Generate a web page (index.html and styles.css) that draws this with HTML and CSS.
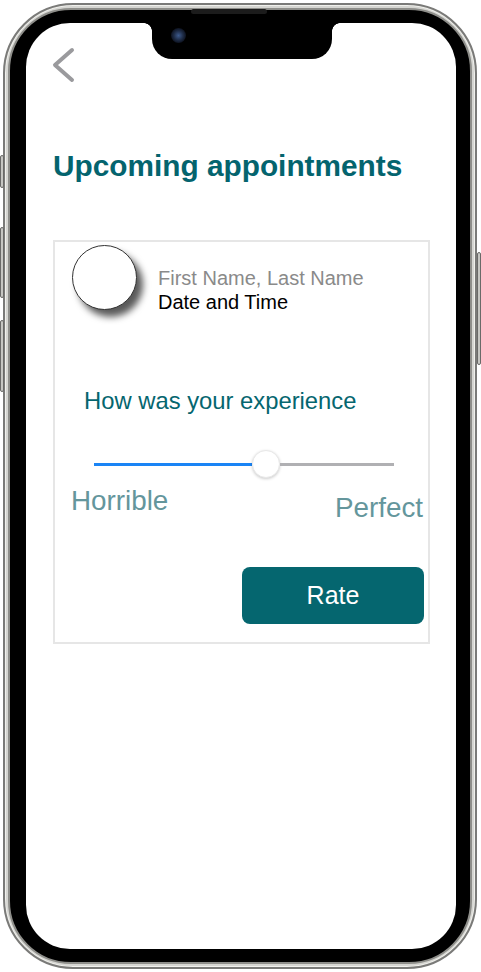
FILE: index.html
```html
<!DOCTYPE html>
<html lang="en">
<head>
<meta charset="utf-8">
<title>Upcoming appointments</title>
<link rel="stylesheet" href="styles.css">
</head>
<body>
<div class="device">
  <span class="btn btn-l1"></span>
  <span class="btn btn-l2"></span>
  <span class="btn btn-l3"></span>
  <span class="btn btn-r1"></span>
  <div class="frame">
    <div class="bezel">
      <span class="speaker"></span>
      <div class="screen">
        <div class="notch"><span class="camera"></span></div>
        <div class="back">
          <svg width="24" height="36" viewBox="0 0 24 36" aria-hidden="true">
            <path d="M20 3 L3 18 L20 33" fill="none" stroke="#9a9a9d" stroke-width="4" stroke-linecap="round" stroke-linejoin="round"/>
          </svg>
        </div>
        <h1 class="title">Upcoming appointments</h1>
        <section class="card">
          <div class="card-head">
            <div class="avatar"></div>
            <div class="who">
              <div class="name">First Name, Last Name</div>
              <div class="when">Date and Time</div>
            </div>
          </div>
          <p class="question">How was your experience</p>
          <div class="slider">
            <span class="fill"></span>
            <span class="thumb"></span>
            <span class="rest"></span>
          </div>
          <div class="labels">
            <span class="lbl">Horrible</span>
            <span class="lbl lbl-end">Perfect</span>
          </div>
          <div class="actions">
            <button class="rate">Rate</button>
          </div>
        </section>
      </div>
    </div>
  </div>
</div>
</body>
</html>
```
FILE: styles.css
```css
* { box-sizing: border-box; }
html, body { margin: 0; padding: 0; background: #fff; }
body { font-family: "Liberation Sans", Arial, sans-serif; width: 481px; height: 972px; overflow: hidden; }

.device { position: relative; width: 481px; height: 972px; padding: 3px 0 0 3px; }

.frame {
  width: 474px;
  height: 966px;
  border: 2px solid #7a7a78;
  background: #d6d6d2;
  padding: 3px;
  border-radius: 70px;
  box-shadow: inset 0 0 0 1px #f0f0ec;
}
.bezel {
  position: relative;
  height: 100%;
  border: 2px solid #8e8e8a;
  background: #000;
  border-radius: 63px;
  padding: 13px 14px 13px 16px;
}
.speaker {
  position: absolute;
  left: 181px;
  top: -1px;
  width: 76px;
  height: 5px;
  border-radius: 3px;
  background: #1c1c1c;
}
.screen {
  position: relative;
  height: 100%;
  background: #fff;
  border-radius: 44px;
  padding: 24px 0 0 26px;
}
.notch {
  position: absolute;
  left: 126px;
  top: 0;
  width: 180px;
  height: 36px;
  background: #000;
  border-radius: 0 0 20px 20px;
}
.notch::before, .notch::after {
  content: "";
  position: absolute;
  top: 0;
  width: 8px;
  height: 8px;
}
.notch::before { left: -8px; background: radial-gradient(circle at 0 8px, transparent 7.5px, #000 8px); }
.notch::after { right: -8px; background: radial-gradient(circle at 8px 8px, transparent 7.5px, #000 8px); }
.camera {
  position: absolute;
  left: 19px;
  top: 5px;
  width: 15px;
  height: 15px;
  border-radius: 50%;
  background: radial-gradient(circle at 50% 50%, #3d5a8c 0, #1d2a44 45%, #0b0f1a 75%, #05070c 100%);
}

.btn { position: absolute; width: 4px; background: #c6c6c2; border: 1px solid #6a6a68; border-radius: 2px; }
.btn-l1 { left: 0; top: 155px; height: 33px; }
.btn-l2 { left: 0; top: 227px; height: 71px; }
.btn-l3 { left: 0; top: 320px; height: 72px; }
.btn-r1 { right: 0; top: 252px; height: 113px; }

.back { height: 36px; }
.back svg { display: block; }

.title {
  margin: 65px 0 0 1px;
  font-size: 29.8px;
  line-height: 36px;
  font-weight: 700;
  color: #04646e;
}

.card {
  margin: 56px 0 0 1px;
  width: 377px;
  height: 404px;
  border: 2px solid #e6e6e6;
}
.card-head { display: flex; align-items: flex-start; padding: 3px 0 0 17px; }
.avatar {
  width: 65px;
  height: 65px;
  border-radius: 50%;
  background: #fff;
  border: 1px solid #333;
  box-shadow: 6px 7px 7px rgba(0, 0, 0, 0.65);
  flex: 0 0 auto;
}
.who { margin: 21px 0 0 21px; font-size: 20px; line-height: 24px; }
.name { color: #8a8a8a; }
.when { color: #000; }

.question {
  margin: 73px 0 0 29px;
  font-size: 23.8px;
  line-height: 28px;
  color: #05666f;
}

.slider {
  display: flex;
  align-items: center;
  margin: 35px 0 0 39px;
  width: 300px;
  height: 28px;
}
.fill { flex: 0 0 158px; height: 3px; background: #1a84f5; }
.thumb {
  flex: 0 0 28px;
  height: 28px;
  border-radius: 50%;
  background: #fff;
  border: 1px solid #e8e8e8;
  box-shadow: 0 1px 3px rgba(0, 0, 0, 0.2);
}
.rest { flex: 1 1 auto; height: 3px; background: #b0b0b3; }

.labels {
  display: flex;
  justify-content: space-between;
  align-items: flex-start;
  margin-top: 7px;
  padding: 0 5px 0 16px;
  font-size: 27.8px;
  line-height: 32px;
  color: #64969c;
}
.lbl-end { margin-top: 7px; }

.actions { display: flex; justify-content: flex-end; margin-top: 43px; padding-right: 4px; }
.rate {
  width: 182px;
  height: 57px;
  border: 0;
  border-radius: 8px;
  background: #05666f;
  color: #fff;
  font-family: "Liberation Sans", Arial, sans-serif;
  font-size: 25px;
  cursor: pointer;
}
```
